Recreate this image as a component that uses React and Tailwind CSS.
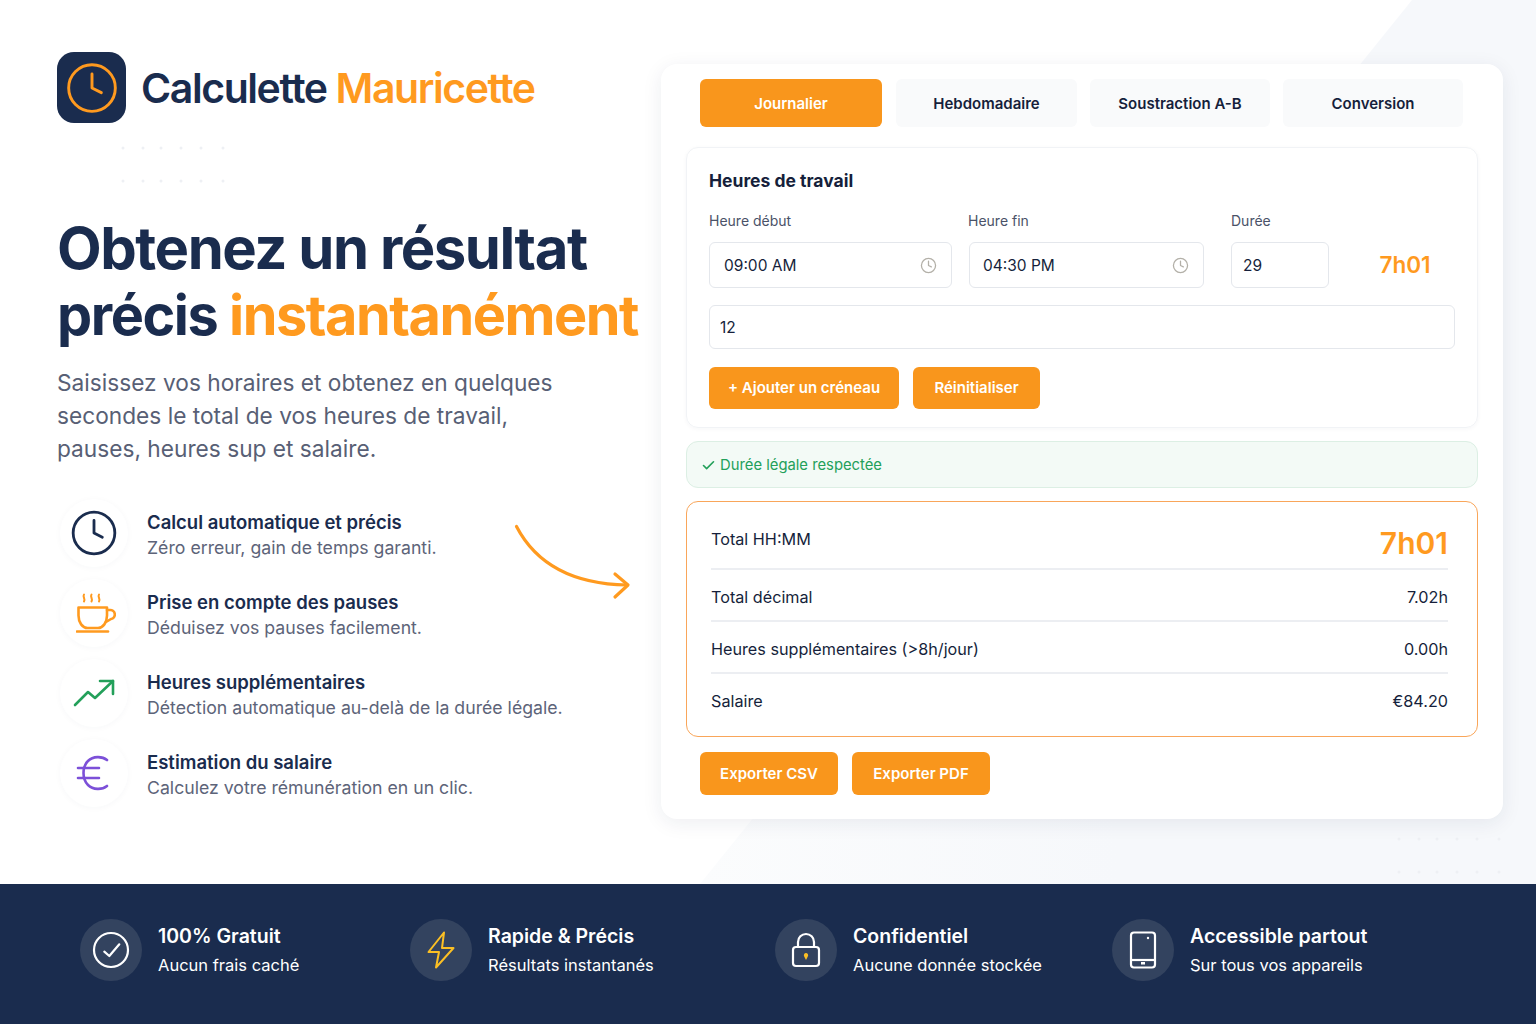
import React from "react";
import { Clock, Check } from "lucide-react";

const features = [
    { title: "Calcul automatique et précis", text: "Zéro erreur, gain de temps garanti.", icon: <Clock size={50} strokeWidth={1.35} className="text-[#1a2c4e]" /> },
    { title: "Prise en compte des pauses", text: "Déduisez vos pauses facilement.", icon: <CoffeeIcon /> },
    { title: "Heures supplémentaires", text: "Détection automatique au-delà de la durée légale.", icon: <TrendIcon /> },
    { title: "Estimation du salaire", text: "Calculez votre rémunération en un clic.", icon: <EuroIcon /> },
];

const perks = [
    { title: "100% Gratuit", text: "Aucun frais caché", width: "w-[330px]", icon: <CheckIcon /> },
    { title: "Rapide & Précis", text: "Résultats instantanés", width: "w-[365px]", icon: <BoltIcon /> },
    { title: "Confidentiel", text: "Aucune donnée stockée", width: "w-[337px]", icon: <LockIcon /> },
    { title: "Accessible partout", text: "Sur tous vos appareils", width: "w-[330px]", icon: <TabletIcon /> },
];

const results = [
    { label: "Total décimal", value: "7.02h", pad: "pt-[5px]" },
    { label: "Heures supplémentaires (>8h/jour)", value: "0.00h", pad: "pt-[4px]" },
    { label: "Salaire", value: "€84.20", pad: "pt-[2px]" },
];

function CoffeeIcon() {
    return (
        <svg width="40" height="40" viewBox="0 0 40 40" fill="none" stroke="#ff9a1f" strokeWidth="2.600" strokeLinecap="round" strokeLinejoin="round" className="ml-[4px]">
            <path d="M8 1.500c-1.800 2.500 1.800 4 0 7" strokeWidth="2" />
            <path d="M15.500 1.500c-1.800 2.500 1.800 4 0 7" strokeWidth="2" />
            <path d="M23 1.500c-1.800 2.500 1.800 4 0 7" strokeWidth="2" />
            <path d="M2.500 14.500h28.500v8c0 7-4 12.500-9 12.500h-10.500c-5 0-9-5.500-9-12.500z" />
            <path d="M31 17h2.500a4.500 4.500 0 0 1 1.500 9l-5 3" />
            <path d="M1 38.500h31" />
        </svg>
    );
}

function TrendIcon() {
    return (
        <svg width="42" height="30" viewBox="0 0 42 30" fill="none" stroke="#23a05a" strokeWidth="2.600" strokeLinecap="round" strokeLinejoin="round">
            <path d="M2 27 15 14l7 6L40 3" />
            <path d="M27 3h13v13" />
        </svg>
    );
}

function EuroIcon() {
    return (
        <svg width="34" height="36" viewBox="0 0 34 36" fill="none" stroke="#7c50d8" strokeWidth="2.600" strokeLinecap="round" strokeLinejoin="round" className="ml-[-3px]">
            <path d="M31 5C26 1 17 1 12 6c-6 6-6 18 0 24 5 5 14 5 19 1" />
            <path d="M2 13h21M2 23h21" />
        </svg>
    );
}

function CheckIcon() {
    return (
        <svg width="40" height="40" viewBox="0 0 40 40" fill="none" stroke="#fff" strokeWidth="2.200" strokeLinecap="round" strokeLinejoin="round">
            <circle cx="20" cy="20" r="17" />
            <path d="M13.300 21.700 18.300 26l10-11.700" />
        </svg>
    );
}

function BoltIcon() {
    return (
        <svg width="28" height="38" viewBox="0 0 28 38" fill="none" stroke="#fbbf24" strokeWidth="2" strokeLinejoin="round">
            <path d="M17 1.500 1.500 21H12L9 36.500 26.500 17H15z" />
        </svg>
    );
}

function LockIcon() {
    return (
        <svg width="30" height="36" viewBox="0 0 30 36" fill="none">
            <path d="M7 15v-5a8 8 0 0 1 16 0v5" stroke="#fff" strokeWidth="2.200" />
            <rect x="2" y="15" width="26" height="19" rx="3" stroke="#fff" strokeWidth="2.200" />
            <path d="M15 21a2.200 2.200 0 0 1 1.800 3.400L15 28l-1.800-3.600A2.200 2.200 0 0 1 15 21z" fill="#fbbf24" />
        </svg>
    );
}

function TabletIcon() {
    return (
        <svg width="28" height="38" viewBox="0 0 28 38" fill="none" stroke="#fff" strokeWidth="2.200">
            <rect x="2" y="1.500" width="24" height="35" rx="3" />
            <path d="M2 29h24" />
            <circle cx="19" cy="7" r="1.200" fill="#fff" stroke="none" />
            <rect x="12" y="31" width="4" height="2.500" fill="#fff" stroke="none" />
        </svg>
    );
}

function FieldClock() {
    return <Clock size={17} strokeWidth={1.8} className="text-[#b3b0a8]" />;
}

function Dots({ className }) {
    const xs = [0, 20, 38, 58, 78, 100];
    return (
        <svg width="110" height="38" viewBox="0 0 110 38" className={className}>
            {xs.map((x) => (
                <g key={x} fill="#eef0f4">
                    <circle cx={x + 3} cy="3" r="1.500" />
                    <circle cx={x + 3} cy="36" r="1.500" />
                </g>
            ))}
        </svg>
    );
}

function OrangeButton({ children, className }) {
    return (
        <button className={"h-full rounded-md bg-[#f9961c] pt-[1px] text-[15px] font-semibold text-white " + className}>
            {children}
        </button>
    );
}

function Tab({ children, active, className }) {
    return (
        <div
            className={
                "flex h-12 items-center justify-center rounded-md pt-[2px] text-[15px] font-semibold " +
                (active ? "bg-[#f9961c] text-white " : "bg-[#f9fafb] text-[#161f3b] ") +
                className
            }
        >
            {children}
        </div>
    );
}

export default function App() {
    return (
        <div className="relative h-[1024px] w-[1536px] overflow-hidden bg-white font-['Inter',sans-serif] text-[#161f3b]">
            {/* fond */}
            <svg className="absolute left-0 top-0" width="1536" height="884" viewBox="0 0 1536 884">
                <defs>
                    <linearGradient id="fond" x1="0" y1="0" x2="1" y2="0">
                        <stop offset="0" stopColor="#fbfcfd" />
                        <stop offset="0.5" stopColor="#f6f8fb" />
                    </linearGradient>
                </defs>
                <polygon points="1412,0 1536,0 1536,884 700,884" fill="url(#fond)" />
            </svg>
            <Dots className="absolute left-[120px] top-[145px]" />
            <Dots className="absolute left-[1396px] top-[836px]" />

            <div className="relative flex h-[884px]">
                {/* colonne gauche */}
                <div className="w-[661px] shrink-0 pl-[57px] pt-[52px]">
                    <div className="flex items-center gap-[15px]">
                        <div className="flex h-[71px] w-[69px] items-center justify-center rounded-[17px] bg-[#1a2c4e]">
                            <Clock size={56} strokeWidth={1.25} className="text-[#ff9a1f]" />
                        </div>
                        <div className="pt-[2px] text-[41px] font-semibold leading-none tracking-[-0.035em] text-[#1a2c4e]">
                            Calculette <span className="text-[#ff9a1f]">Mauricette</span>
                        </div>
                    </div>

                    <h1 className="mt-[92px] whitespace-nowrap text-[58px] font-bold leading-[66px] tracking-[-0.025em] text-[#1a2c4e]">
                        Obtenez un résultat
                        <br />
                        <span className="text-[55.800px]">
                            précis <span className="text-[#ff9a1f]">instantanément</span>
                        </span>
                    </h1>
                    <p className="mt-[18px] text-[22.700px] leading-[33px] text-[#585f75]">
                        Saisissez vos horaires et obtenez en quelques
                        <br />
                        secondes le total de vos heures de travail,
                        <br />
                        pauses, heures sup et salaire.
                    </p>

                    <div className="mt-[34px] flex flex-col gap-3">
                        {features.map((f) => (
                            <div key={f.title} className="flex h-[68px] items-center pl-[3px]">
                                <div className="flex h-[68px] w-[68px] shrink-0 items-center justify-center rounded-full bg-white shadow-[0_1px_6px_rgba(26,44,78,0.035)]">
                                    {f.icon}
                                </div>
                                <div className="ml-[19px] mt-[4px]">
                                    <div className="text-[18.500px] font-semibold leading-[26px] text-[#1a2c4e]">{f.title}</div>
                                    <div className="text-[17.700px] leading-[26px] text-[#5d6479]">{f.text}</div>
                                </div>
                            </div>
                        ))}
                    </div>
                </div>

                {/* carte calculette */}
                <div className="mt-16 h-[755px] w-[842px] shrink-0 rounded-2xl bg-white px-[25px] pt-[15px] shadow-[0_4px_20px_rgba(26,44,78,0.08)]">
                    <div className="flex pl-[14px]">
                        <Tab active className="w-[182px]">Journalier</Tab>
                        <Tab className="ml-[14px] w-[181px]">Hebdomadaire</Tab>
                        <Tab className="ml-[13px] w-[180px]">Soustraction A-B</Tab>
                        <Tab className="ml-[13px] w-[180px]">Conversion</Tab>
                    </div>

                    <div className="mt-5 h-[281px] rounded-xl border border-[#f1f3f6] px-[22px] pt-[21px] shadow-[0_1px_4px_rgba(26,44,78,0.04)]">
                        <div className="text-[17.500px] font-bold leading-6">Heures de travail</div>
                        <div className="mt-[18px] flex text-[14px] leading-5 text-[#4a5268]">
                            <div className="w-[259px]">Heure début</div>
                            <div className="w-[263px]">Heure fin</div>
                            <div>Durée</div>
                        </div>
                        <div className="mt-[11px] flex h-[46px] items-stretch text-[15.500px]">
                            <div className="flex w-[243px] shrink-0 items-center justify-between rounded-md border border-[#e4e7ec] px-[14px] pt-[1px]">
                                09:00 AM
                                <FieldClock />
                            </div>
                            <div className="ml-[17px] flex w-[235px] shrink-0 items-center justify-between rounded-md border border-[#e4e7ec] pl-[13px] pr-[14px] pt-[1px]">
                                04:30 PM
                                <FieldClock />
                            </div>
                            <div className="ml-[27px] flex w-[98px] shrink-0 items-center rounded-md border border-[#e4e7ec] pl-[11px] pt-[1px]">29</div>
                            <div className="flex w-[126px] shrink-0 items-center justify-center pl-[26px] text-[22.500px] font-semibold text-[#ff9a1f]">7h01</div>
                        </div>
                        <div className="mt-[17px] flex h-[44px] items-center rounded-md border border-[#e4e7ec] pl-[10px] pt-[2px] text-[15.500px]">12</div>
                        <div className="mt-[18px] flex h-[42px] gap-[14px]">
                            <OrangeButton className="w-[190px]">+ Ajouter un créneau</OrangeButton>
                            <OrangeButton className="w-[127px]">Réinitialiser</OrangeButton>
                        </div>
                    </div>

                    <div className="mt-[13px] flex h-[47px] items-center gap-[4px] rounded-xl border border-[#dcefe4] bg-[#f3faf6] pl-[14px] pt-[1px] text-[14.800px] text-[#23a05a]">
                        <Check size={15} strokeWidth={2.6} /> Durée légale respectée
                    </div>

                    <div className="mt-[13px] h-[236px] rounded-xl border-[1.500px] border-[#f9a65a] bg-white pl-[24px] pr-[29px] text-[16.200px]">
                        <div className="flex h-[68px] items-center justify-between border-b-2 border-[#eceef2] pt-[6px]">
                            <span className="mt-[3px]">Total HH:MM</span>
                            <span className="mt-[10px] text-[30px] font-semibold text-[#ff9a1f]">7h01</span>
                        </div>
                        {results.map((r, i) => (
                            <div
                                key={r.label}
                                className={"flex h-[52px] items-center justify-between " + r.pad + " " + (i < 2 ? "border-b-2 border-[#eceef2]" : "")}
                            >
                                <span>{r.label}</span>
                                <span>{r.value}</span>
                            </div>
                        ))}
                    </div>

                    <div className="mt-[15px] flex h-[43px] gap-[14px] pl-[14px]">
                        <OrangeButton className="w-[138px]">Exporter CSV</OrangeButton>
                        <OrangeButton className="w-[138px]">Exporter PDF</OrangeButton>
                    </div>
                </div>

                {/* flèche */}
                <svg className="absolute left-[510px] top-[520px]" width="124" height="82" viewBox="0 0 124 82" fill="none" stroke="#ff9a1f" strokeWidth="3.200" strokeLinecap="round" strokeLinejoin="round">
                    <path d="M6.500 6.500C24 40 57 64 117 65" />
                    <path d="M105 54l13 11-13 12" />
                </svg>
            </div>

            {/* bandeau bas */}
            <div className="relative flex h-[140px] items-start bg-[#1a2c4e] pl-[80px] pt-[35px]">
                {perks.map((p) => (
                    <div key={p.title} className={"flex shrink-0 items-center " + p.width}>
                        <div className="flex h-[62px] w-[62px] shrink-0 items-center justify-center rounded-full bg-[#33435f]">
                            {p.icon}
                        </div>
                        <div className="mb-[2px] ml-4">
                            <div className="text-[19.500px] font-semibold leading-7 text-white">{p.title}</div>
                            <div className="mt-[3px] text-[16.500px] leading-6 text-white">{p.text}</div>
                        </div>
                    </div>
                ))}
            </div>
        </div>
    );
}
